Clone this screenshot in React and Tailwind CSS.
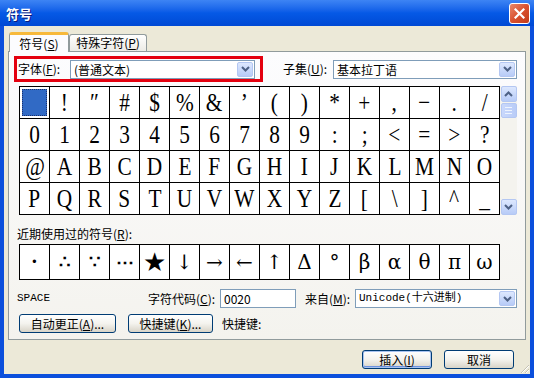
import React from 'react'

const rows = [
  [' ', '!', '″', '#', '$', '%', '&', '’', '(', ')', '*', '+', ',', '−', '.', '/'],
  ['0', '1', '2', '3', '4', '5', '6', '7', '8', '9', ':', ';', '<', '=', '>', '?'],
  ['@', 'A', 'B', 'C', 'D', 'E', 'F', 'G', 'H', 'I', 'J', 'K', 'L', 'M', 'N', 'O'],
  ['P', 'Q', 'R', 'S', 'T', 'U', 'V', 'W', 'X', 'Y', 'Z', '[', '\\', ']', '^', '_'],
]

const recent = ['·', '∴', '∵', '⋯', '★', '↓', '→', '←', '↑', 'Δ', '°', 'β', 'α', 'θ', 'π', 'ω']

function Chevron({ up }) {
  return (
    <svg width="9" height="6" viewBox="0 0 9 6">
      <path d={up ? 'M1 5 L4.5 1.5 L8 5' : 'M1 1 L4.5 4.5 L8 1'} stroke="#4d6185" strokeWidth="2" fill="none" />
    </svg>
  )
}

function ArrowBtn({ up }) {
  return (
    <div className="flex h-[16px] w-[16px] items-center justify-center rounded-[2px] border border-[#b4c7f2] bg-gradient-to-b from-[#dde8fe] to-[#b7cbf7]">
      <Chevron up={up} />
    </div>
  )
}

function Combo({ w, children, mono }) {
  return (
    <div className={`flex h-[19px] items-center border border-[#7f9db9] bg-white ${w}`}>
      <span className={`flex-1 whitespace-nowrap pl-[3px] leading-[17px] ${mono ? "font-['Liberation_Mono','Noto_Sans_CJK_SC',monospace] text-[11px]" : 'text-[12px]'}`}>
        {children}
      </span>
      <div className="m-px flex h-[15px] w-[16px] items-center justify-center rounded-[2px] border border-[#b4c7f2] bg-gradient-to-b from-[#dde8fe] to-[#b7cbf7]">
        <Chevron />
      </div>
    </div>
  )
}

function XpButton({ w, children, primary }) {
  return (
    <div
      className={`flex h-[19px] items-center justify-center rounded-[3px] border border-[#003c74] bg-gradient-to-b from-white via-[#f4f3ee] to-[#d8d4c8] text-[12px] leading-none ${w} ${
        primary ? 'shadow-[inset_0_0_0_1px_#a8c3f0,inset_0_-1px_0_1px_#6d92e0]' : ''
      }`}
    >
      {children}
    </div>
  )
}

export default function App() {
  return (
    <div className="h-[378px] w-[534px] overflow-hidden font-['Noto_Sans_CJK_SC','Liberation_Sans',sans-serif] text-black">
      {/* title bar */}
      <div className="flex h-[26px] items-center justify-between bg-gradient-to-b from-[#3d84f4] via-[#0559e6] to-[#0049d4] pl-[6px] pr-[4px]">
        <span className="text-[13px] font-bold leading-none text-white [text-shadow:1px_1px_0_#0a1a7a]">符号</span>
        <div className="flex h-[21px] w-[21px] items-center justify-center rounded-[3px] border border-white bg-gradient-to-br from-[#e9876a] via-[#d9512f] to-[#c13a18]">
          <svg width="11" height="11" viewBox="0 0 11 11">
            <path d="M1.5 1.5 L9.5 9.5 M9.5 1.5 L1.5 9.5" stroke="white" strokeWidth="2.2" strokeLinecap="square" />
          </svg>
        </div>
      </div>

      {/* body */}
      <div className="relative h-[352px] border-x-[4px] border-b-[4px] border-[#0b4fdc] bg-[#ece9d8] pt-[7px]">
        {/* tabs */}
        <div className="relative z-10 ml-[5px] flex h-[19px] items-end">
          <div className="flex h-[20px] w-[60px] items-center justify-center rounded-t-[3px] border-x border-t-[3px] border-x-[#919b9c] border-t-[#f7b93b] bg-[#fcfcfe] text-[12px] leading-none">
            符号(<u>S</u>)
          </div>
          <div className="mb-px flex h-[17px] w-[78px] items-center justify-center rounded-t-[3px] border-x border-t border-[#919b9c] bg-gradient-to-b from-white to-[#ecebe5] text-[12px] leading-none">
            特殊字符(<u>P</u>)
          </div>
        </div>

        {/* panel */}
        <div className="-mt-px ml-[4px] h-[289px] w-[518px] border border-[#919b9c] bg-gradient-to-b from-[#fcfcfe] to-[#f4f3ee]">
          {/* font / subset row */}
          <div className="mt-[4px] flex items-center">
            <div className="ml-[5px] flex h-[26px] w-[249px] items-center border-[3px] border-[#e4000f] pl-px">
              <span className="w-[52px] text-[12px] leading-none">字体(<u>F</u>):</span>
              <Combo w="w-[185px]">(普通文本)</Combo>
            </div>
            <span className="ml-[20px] w-[50px] text-[12px] leading-none">子集(<u>U</u>):</span>
            <Combo w="w-[184px]">基本拉丁语</Combo>
          </div>

          {/* character grid */}
          <div className="ml-[10px] mt-[4px] flex">
            <div className="border-l border-t border-black font-['Liberation_Serif',serif]">
              {rows.map((r, ri) => (
                <div key={ri} className="flex">
                  {r.map((c, ci) => (
                    <div
                      key={ci}
                      className={`flex h-[32px] w-[30px] items-center justify-center border-b border-r border-black bg-white text-[26px] leading-none ${
                        ri === 0 && ci === 0 ? 'p-[2px]' : ''
                      }`}
                    >
                      {ri === 0 && ci === 0 ? (
                        <div className="h-full w-full border border-dotted border-[#1a2f6a] bg-[#316ac5]" />
                      ) : (
                        <span className="inline-block scale-x-[0.82]">{c}</span>
                      )}
                    </div>
                  ))}
                </div>
              ))}
            </div>
            <div className="flex h-[129px] w-[17px] flex-col items-center bg-[#f4f3ee]">
              <ArrowBtn up />
              <div className="mt-px flex h-[15px] w-[16px] flex-col items-center justify-center gap-[2px] rounded-[2px] border border-[#b4c7f2] bg-gradient-to-r from-[#c9d8fc] to-[#b9ccf7]">
                <div className="h-px w-[7px] bg-[#eef4fe]" />
                <div className="h-px w-[7px] bg-[#eef4fe]" />
                <div className="h-px w-[7px] bg-[#eef4fe]" />
              </div>
              <div className="flex-1" />
              <ArrowBtn />
            </div>
          </div>

          {/* recent symbols */}
          <div className="ml-[8px] mt-[12px] text-[12px] leading-[14px]">近期使用过的符号(<u>R</u>):</div>
          <div className="ml-[10px] mt-[3px] flex w-[481px] border-l border-t border-black">
            {recent.map((c, i) => (
              <div
                key={i}
                className={`flex h-[35px] w-[30px] items-center justify-center border-b border-r border-black bg-white font-['DejaVu_Serif','Liberation_Serif',serif] leading-none ${
                  i === 4 ? 'text-[26px]' : i < 4 ? 'text-[18px] font-bold' : 'text-[20px]'
                }`}
              >
                {c}
              </div>
            ))}
          </div>

          {/* code row */}
          <div className="mt-[9px] flex h-[19px] items-center">
            <span className="ml-[8px] w-[131px] font-['Liberation_Mono',monospace] text-[11px] leading-none">SPACE</span>
            <span className="w-[72px] text-[12px] leading-none">字符代码(<u>C</u>):</span>
            <div className="flex h-[19px] w-[76px] items-center border border-[#7f9db9] bg-white pl-[3px] text-[12px] leading-none">0020</div>
            <span className="ml-[9px] w-[50px] text-[12px] leading-none">来自(<u>M</u>):</span>
            <Combo w="w-[162px]" mono>
              Unicode(十六进制)
            </Combo>
          </div>

          {/* buttons row */}
          <div className="mt-[6px] flex items-center">
            <div className="ml-[10px]">
              <XpButton w="w-[97px]">自动更正(<u>A</u>)...</XpButton>
            </div>
            <div className="ml-[12px]">
              <XpButton w="w-[85px]">快捷键(<u>K</u>)...</XpButton>
            </div>
            <span className="ml-[9px] text-[12px] leading-none">快捷键:</span>
          </div>
        </div>

        {/* dialog buttons */}
        <div className="mr-[16px] mt-[10px] flex justify-end gap-[12px]">
          <XpButton w="w-[70px]" primary>
            插入(<u>I</u>)
          </XpButton>
          <XpButton w="w-[70px]">取消</XpButton>
        </div>

        {/* resize grip */}
        <svg className="absolute bottom-0 right-0" width="12" height="12" viewBox="0 0 12 12">
          <path d="M11 3 L3 11 M11 7 L7 11" stroke="#c5c2b2" strokeWidth="1" />
          <path d="M11 4 L4 11 M11 8 L8 11" stroke="#ffffff" strokeWidth="1" />
        </svg>
      </div>
    </div>
  )
}
